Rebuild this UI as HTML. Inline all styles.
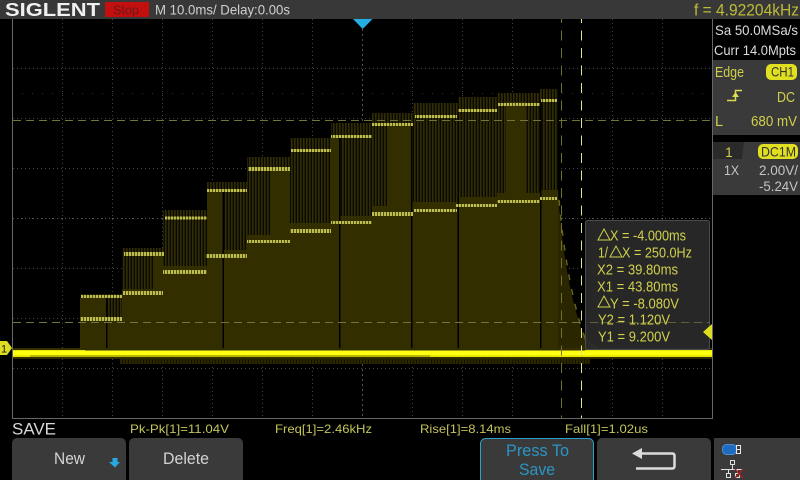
<!DOCTYPE html>
<html><head><meta charset="utf-8"><style>
html,body{margin:0;padding:0;background:#000;width:800px;height:480px;overflow:hidden}
svg{display:block}
text{font-family:"Liberation Sans",sans-serif}
</style></head><body>
<svg width="800" height="480" viewBox="0 0 800 480" xmlns="http://www.w3.org/2000/svg">
<defs>
<pattern id="st" width="3" height="4" patternUnits="userSpaceOnUse"><rect width="3" height="4" fill="#0b0a00"/><rect width="1.600" height="4" fill="#302d06"/></pattern>
<pattern id="br" width="3" height="4" patternUnits="userSpaceOnUse"><rect width="3" height="4" fill="#55550f"/><rect width="2" height="4" fill="#bcbc50"/></pattern>
<pattern id="dn" width="3" height="8" patternUnits="userSpaceOnUse"><rect width="3" height="8" fill="#141300"/><rect width="2" height="8" fill="#2a2700"/></pattern>
</defs>
<rect width="800" height="480" fill="#000"/>
<!-- grid -->
<g stroke="#444" stroke-width="1" stroke-dasharray="1 3" fill="none">
<path d="M62.500 19V418M112.500 19V418M162.500 19V418M212.500 19V418M262.500 19V418M312.500 19V418M412.500 19V418M462.500 19V418M512.500 19V418M612.500 19V418M662.500 19V418"/>
<path d="M13 68.500H712M13 118.500H712M13 168.500H712M13 268.500H712M13 318.500H712M13 368.500H712"/>
</g>
<g stroke="#555" stroke-width="1" fill="none">
<path d="M13 218.500H712" stroke-dasharray="1 3"/>
<path d="M362.500 19V418" stroke-dasharray="2 3"/>
<path d="M22 93.500H712" stroke="#333" stroke-dasharray="1 9"/>
<path d="M22 218.500H712" stroke-dasharray="1 9"/>
</g>
<path d="M12.500 19V418.500H712.500V19" fill="none" stroke="#666"/>

<!-- waveform: stripes -->
<rect x="80" y="294" width="42" height="25" fill="url(#st)"/>
<rect x="122" y="248" width="41" height="46" fill="url(#st)"/>
<rect x="163" y="210" width="44" height="62" fill="url(#st)"/>
<rect x="207" y="182" width="40" height="73" fill="url(#st)"/>
<rect x="247" y="157" width="43" height="85" fill="url(#st)"/>
<rect x="290" y="138" width="41" height="92" fill="url(#st)"/>
<rect x="331" y="123" width="41" height="98" fill="url(#st)"/>
<rect x="372" y="113" width="41" height="99" fill="url(#st)"/>
<rect x="413" y="103" width="45" height="107" fill="url(#st)"/>
<rect x="458" y="97" width="39" height="108" fill="url(#st)"/>
<rect x="497" y="93" width="43" height="109" fill="url(#st)"/>
<rect x="540" y="89" width="18" height="108" fill="url(#st)"/>
<!-- solid -->
<g fill="#322e00">
<rect x="80" y="319" width="42" height="33"/>
<rect x="80" y="298" width="27" height="22"/>
<rect x="122" y="289" width="41" height="62"/>
<rect x="154" y="254" width="9" height="40"/>
<rect x="163" y="266" width="44" height="86"/>
<rect x="207" y="191" width="16" height="65"/>
<rect x="207" y="250" width="40" height="102"/>
<rect x="247" y="235" width="43" height="117"/>
<rect x="270" y="169" width="20" height="75"/>
<rect x="290" y="223" width="41" height="129"/>
<rect x="331" y="135" width="8" height="90"/>
<rect x="331" y="216" width="41" height="136"/>
<rect x="387" y="124" width="26" height="90"/>
<rect x="372" y="206" width="41" height="146"/>
<rect x="413" y="202" width="45" height="150"/>
<rect x="458" y="197" width="39" height="155"/>
<rect x="506" y="102" width="20" height="100"/>
<rect x="497" y="193" width="43" height="159"/>
<rect x="540" y="190" width="18" height="162"/>
<path d="M558 190C561 240 569 300 585 338C590 346 600 350 612 352H558Z" fill="#2a2700"/>
</g>
<!-- falling edge glints -->
<path d="M559 200C563 245 571 300 585 338C590 346 598 349 612 351" fill="none" stroke="#63631a" stroke-width="1.500" stroke-dasharray="6 9"/>
<path d="M585 338C590 346 598 349 612 351" fill="none" stroke="#66663a" stroke-width="2" stroke-dasharray="2 1"/>
<!-- black gaps -->
<g fill="#000">
<rect x="106" y="296" width="1.500" height="52"/>
<rect x="222.500" y="191" width="1.500" height="158"/>
<rect x="339" y="137" width="1.500" height="212"/>
<rect x="411" y="126" width="1.500" height="223"/>
<rect x="457.500" y="110" width="1.500" height="239"/>
<rect x="540" y="100" width="1.500" height="249"/>
</g>
<!-- bright bands -->
<g fill="url(#br)">
<rect x="81" y="295" width="41" height="3"/>
<rect x="80" y="317" width="42" height="4"/>
<rect x="124" y="252" width="40" height="4"/>
<rect x="123" y="291" width="40" height="4"/>
<rect x="165" y="216.500" width="42" height="3"/>
<rect x="163" y="270" width="44" height="4"/>
<rect x="207" y="189" width="40" height="3"/>
<rect x="206" y="254" width="41" height="4"/>
<rect x="248" y="167" width="42" height="4"/>
<rect x="247" y="240" width="43" height="3"/>
<rect x="291" y="149" width="40" height="3"/>
<rect x="290" y="229" width="41" height="4"/>
<rect x="331" y="135" width="41" height="3"/>
<rect x="331" y="221" width="41" height="3"/>
<rect x="372" y="123" width="41" height="3"/>
<rect x="372" y="212" width="41" height="4"/>
<rect x="415" y="115" width="42" height="3"/>
<rect x="414" y="209" width="43" height="3"/>
<rect x="458" y="109" width="39" height="3"/>
<rect x="456" y="204" width="41" height="3"/>
<rect x="498" y="103" width="42" height="3"/>
<rect x="497" y="200" width="43" height="3"/>
<rect x="541" y="99" width="16" height="3"/>
<rect x="540" y="197" width="17" height="3"/>
</g>
<!-- lower fuzz and main line -->
<rect x="120" y="357" width="470" height="7" fill="url(#dn)"/>
<rect x="13" y="348" width="699" height="11" fill="#322e00"/>
<rect x="13" y="350" width="699" height="7" fill="#e8e800"/>
<rect x="13" y="351" width="699" height="4" fill="#ffff10"/>
<rect x="85" y="350" width="500" height="1" fill="#9a9a18"/>
<rect x="30" y="355" width="400" height="2" fill="#b8b800"/>

<!-- cursors -->
<g fill="none" stroke-width="1">
<path d="M13 120.500H712" stroke="#73733a" stroke-dasharray="8 5"/>
<path d="M13 322.500H712" stroke="#73733a" stroke-dasharray="8 5"/>
<path d="M561.500 13V418" stroke="#6f6f30" stroke-dasharray="10 7.500"/>
<path d="M581.500 13V418" stroke="#e2e28e" stroke-dasharray="10 7.500"/>
</g>

<!-- cursor box -->
<rect x="585.500" y="220.500" width="124" height="129" rx="2" fill="#2a2a2a" fill-opacity="0.92" stroke="#4a4a4a"/>
<path d="M590 322.500H710" stroke="#62623a" stroke-dasharray="8 5"/>
<g fill="#d0d04c" font-size="14.500">
<path d="M598 240L604 229 610 240Z" fill="none" stroke="#d0d04c"/>
<text x="610" y="240.500" textLength="76" lengthAdjust="spacingAndGlyphs">X = -4.000ms</text>
<text x="598" y="257.500" textLength="10" lengthAdjust="spacingAndGlyphs">1/</text>
<path d="M610 257L616 246 622 257Z" fill="none" stroke="#d0d04c"/>
<text x="622" y="257.500" textLength="70" lengthAdjust="spacingAndGlyphs">X = 250.0Hz</text>
<text x="597" y="274.500" textLength="81" lengthAdjust="spacingAndGlyphs">X2 = 39.80ms</text>
<text x="597" y="291.500" textLength="81" lengthAdjust="spacingAndGlyphs">X1 = 43.80ms</text>
<path d="M598 307L604 296 610 307Z" fill="none" stroke="#d0d04c"/>
<text x="610" y="308.500" textLength="69" lengthAdjust="spacingAndGlyphs">Y = -8.080V</text>
<text x="598" y="324.500" textLength="72" lengthAdjust="spacingAndGlyphs">Y2 = 1.120V</text>
<text x="598" y="341.500" textLength="72" lengthAdjust="spacingAndGlyphs">Y1 = 9.200V</text>
</g>

<!-- markers -->
<path d="M353 19H372.500L362.700 29Z" fill="#24aee2"/>
<path d="M712 324V340L703 332Z" fill="#dede20"/>
<path d="M0 341H7L12 348 7 355H0Z" fill="#dede20"/>
<text x="1" y="352.500" font-size="11" fill="#222">1</text>

<!-- header -->
<rect width="800" height="19" fill="#383838"/>
<text x="5" y="16" font-size="18" font-weight="bold" fill="#f0f0f0" textLength="95" lengthAdjust="spacingAndGlyphs">SIGLENT</text>
<rect x="105" y="2" width="44" height="15" fill="#c40f0f"/>
<text x="113" y="14.500" font-size="13" fill="#6a1818" textLength="26" lengthAdjust="spacingAndGlyphs">Stop</text>
<text x="155" y="14.500" font-size="14" fill="#d0d0d0" textLength="135" lengthAdjust="spacingAndGlyphs">M 10.0ms/ Delay:0.00s</text>
<text x="694" y="15.500" font-size="17" fill="#bcbc38" textLength="105" lengthAdjust="spacingAndGlyphs">f = 4.92204kHz</text>

<!-- right panel -->
<rect x="713" y="19" width="87" height="419" fill="#000"/>
<text x="715" y="35" font-size="14" fill="#dcdcdc" textLength="83" lengthAdjust="spacingAndGlyphs">Sa 50.0MSa/s</text>
<text x="714" y="55" font-size="14" fill="#dcdcdc" textLength="82" lengthAdjust="spacingAndGlyphs">Curr 14.0Mpts</text>
<rect x="713" y="60" width="87" height="75" fill="#3a3a3a"/>
<text x="715" y="77" font-size="14.500" fill="#cfcf4c" textLength="29" lengthAdjust="spacingAndGlyphs">Edge</text>
<rect x="766" y="64" width="31" height="16" rx="5" fill="#e0e020"/>
<text x="771" y="76.500" font-size="14" fill="#333" textLength="23" lengthAdjust="spacingAndGlyphs">CH1</text>
<path d="M727 100.500H735.500V90.500H742" fill="none" stroke="#dcdc50" stroke-width="1.500"/>
<path d="M732 97L735.500 92 739 97Z" fill="#dcdc50"/>
<text x="777" y="102" font-size="14.500" fill="#cfcf4c" textLength="18" lengthAdjust="spacingAndGlyphs">DC</text>
<text x="715" y="126" font-size="14.500" fill="#cfcf4c">L</text>
<text x="751" y="126" font-size="14.500" fill="#cfcf4c" textLength="46" lengthAdjust="spacingAndGlyphs">680 mV</text>
<rect x="713" y="142" width="87" height="53" fill="#3a3a3a"/>
<path d="M713 142H744L742 159H713Z" fill="#2a2a2a"/>
<text x="725" y="157" font-size="14" fill="#cfcf4c">1</text>
<rect x="758" y="144" width="40" height="15" rx="5" fill="#e0e020"/>
<text x="761" y="156.500" font-size="14" fill="#333" textLength="35" lengthAdjust="spacingAndGlyphs">DC1M</text>
<text x="724" y="175" font-size="14" fill="#c4c4c4" textLength="15" lengthAdjust="spacingAndGlyphs">1X</text>
<text x="759" y="175" font-size="14" fill="#c4c4c4" textLength="39" lengthAdjust="spacingAndGlyphs">2.00V/</text>
<text x="759" y="191" font-size="14" fill="#c4c4c4" textLength="39" lengthAdjust="spacingAndGlyphs">-5.24V</text>

<!-- bottom -->
<text x="12" y="434.500" font-size="17" fill="#d8d8d8" textLength="44" lengthAdjust="spacingAndGlyphs">SAVE</text>
<g font-size="12" fill="#c4c45a">
<text x="130" y="433" textLength="99" lengthAdjust="spacingAndGlyphs">Pk-Pk[1]=11.04V</text>
<text x="275" y="433" textLength="97" lengthAdjust="spacingAndGlyphs">Freq[1]=2.46kHz</text>
<text x="420" y="433" textLength="91" lengthAdjust="spacingAndGlyphs">Rise[1]=8.14ms</text>
<text x="565" y="433" textLength="83" lengthAdjust="spacingAndGlyphs">Fall[1]=1.02us</text>
</g>
<g fill="#3a3a3a">
<rect x="12" y="438" width="114" height="46" rx="5"/>
<rect x="129" y="438" width="114" height="46" rx="5"/>
<rect x="597" y="438" width="114" height="46" rx="5"/>
</g>
<rect x="480.500" y="438.500" width="113" height="46" rx="5" fill="#3a3a3a" stroke="#2aa0cc"/>
<rect x="714" y="438" width="86" height="42" fill="#3a3a3a"/>
<text x="54" y="464" font-size="17" fill="#d4d4d4" textLength="31" lengthAdjust="spacingAndGlyphs">New</text>
<path d="M112.500 458H117.500V462H120L115 467.500 109 462H112.500Z" fill="#28a8e0"/>
<text x="163" y="464" font-size="17" fill="#d4d4d4" textLength="46" lengthAdjust="spacingAndGlyphs">Delete</text>
<text x="506" y="456" font-size="17" fill="#2a96c4" textLength="63" lengthAdjust="spacingAndGlyphs">Press To</text>
<text x="519" y="475" font-size="17" fill="#2a96c4" textLength="36" lengthAdjust="spacingAndGlyphs">Save</text>
<path d="M642 453.500H672.500Q674.500 453.500 674.500 456V466Q674.500 468.500 672 468.500H636" fill="none" stroke="#dcdcdc" stroke-width="2.500"/>
<path d="M632 453.500L642 448V459Z" fill="#dcdcdc"/>
<rect x="722.500" y="444.500" width="14" height="10" rx="4" fill="#1e6cc0" stroke="#4a90d0"/>
<rect x="736.500" y="445.500" width="4" height="8" fill="#3a3a3a" stroke="#e8e8e8"/>
<path d="M736.500 449.500H741" stroke="#e8e8e8"/>
<g fill="none" stroke="#e0e0e0">
<rect x="730.500" y="460.500" width="4" height="4"/>
<rect x="726.500" y="473.500" width="4" height="4"/>
<rect x="735.500" y="473.500" width="4" height="4"/>
<path d="M732.500 464.500V469.500M721 469.500H743M728.500 469.500V473.500M737.500 469.500V473.500"/>
</g>
<path d="M735 469L743 478M743 469L735 478" stroke="#a82020" stroke-width="1.500"/>
</svg>
</body></html>
